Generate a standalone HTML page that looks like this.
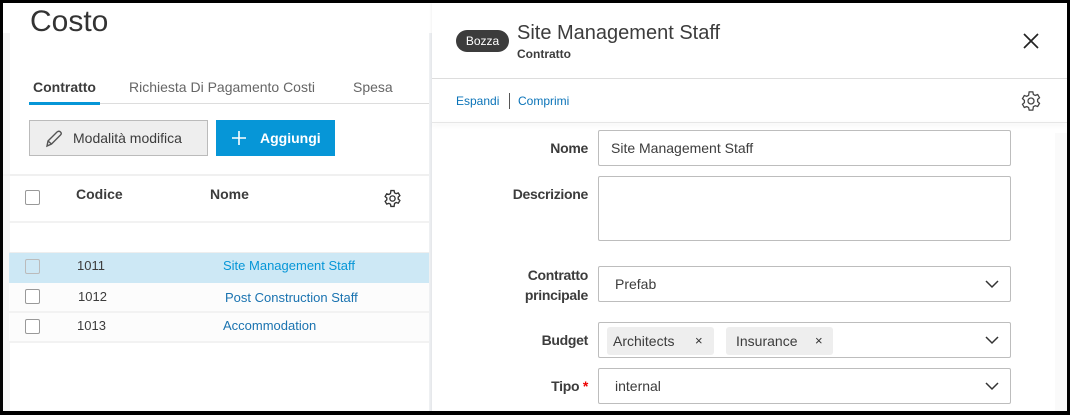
<!DOCTYPE html>
<html><head><meta charset="utf-8"><style>
*{box-sizing:border-box;margin:0;padding:0}
body{width:1070px;height:415px;overflow:hidden;background:#000;font-family:"Liberation Sans",sans-serif;position:relative}
.abs{position:absolute}
#page{position:absolute;left:3px;top:3px;width:1064px;height:408px;background:#fff;overflow:hidden}
.t{position:absolute;white-space:nowrap}
.cb{position:absolute;width:15px;height:15px;border:1px solid #999;border-radius:2px;background:#fff}
.lbl{position:absolute;right:479px;font-size:14px;font-weight:bold;color:#3c3c3c;text-align:right;letter-spacing:-0.3px}
.inp{position:absolute;left:595px;width:413px;border:1px solid #bdbdbd;border-radius:2px;background:#fff}
.chev{position:absolute;right:11px;top:12px}
</style></head><body>
<div id="page">
  <div class="abs" style="left:0;top:30px;width:7px;height:380px;background:#f5f5f5"></div>
  <div class="t" style="left:27px;top:2px;font-size:30px;color:#333">Costo</div>
  <div class="t" style="left:30px;top:76px;font-size:14px;font-weight:bold;color:#3c3c3c">Contratto</div>
  <div class="t" style="left:126px;top:76px;font-size:14px;color:#666">Richiesta Di Pagamento Costi</div>
  <div class="t" style="left:350px;top:76px;font-size:14px;color:#666">Spesa</div>
  <div class="abs" style="left:26px;top:100px;width:404px;height:1px;background:#ddd"></div>
  <div class="abs" style="left:26px;top:99px;width:71px;height:3px;background:#0696d7"></div>
  <div class="abs" style="left:26px;top:117px;width:179px;height:36px;background:#eee;border:1px solid #bbb"></div>
  <svg class="abs" style="left:41px;top:126px" width="20" height="20" viewBox="0 0 20 20"><path d="M3 17 L4 12 L13 3 Q15 1.5 16.5 3 Q18 4.5 16.5 6 L7.5 15 Z M4 12 L7.5 15" fill="none" stroke="#555" stroke-width="1.4"/></svg>
  <div class="t" style="left:70px;top:127px;font-size:14px;color:#3c3c3c">Modalità modifica</div>
  <div class="abs" style="left:213px;top:117px;width:119px;height:36px;background:#0696d7"></div>
  <svg class="abs" style="left:228px;top:127px" width="16" height="16"><path d="M8 1V15M1 8H15" stroke="#fff" stroke-width="1.6"/></svg>
  <div class="t" style="left:257px;top:127px;font-size:14px;font-weight:bold;color:#fff">Aggiungi</div>
  <div class="abs" style="left:0;top:171px;width:430px;height:2px;background:#f0f0f0"></div>
  <div class="cb" style="left:22px;top:187px"></div>
  <div class="t" style="left:73px;top:183px;font-size:14px;font-weight:bold;color:#3c3c3c">Codice</div>
  <div class="t" style="left:207px;top:183px;font-size:14px;font-weight:bold;color:#3c3c3c">Nome</div>
  <svg class="abs" style="left:380px;top:186px" width="19" height="19" viewBox="0 0 24 24"><path d="M10 2h4l.6 2.8 2 1.1 2.7-.9 2 3.4-2.1 1.9v2.4l2.1 1.9-2 3.4-2.7-.9-2 1.1L14 22h-4l-.6-2.8-2-1.1-2.7.9-2-3.4 2.1-1.9v-2.4L2.7 9.4l2-3.4 2.7.9 2-1.1z" fill="none" stroke="#333" stroke-width="1.7"/><circle cx="12" cy="12" r="3.3" fill="none" stroke="#333" stroke-width="1.7"/></svg>
  <div class="abs" style="left:6px;top:218px;width:422px;height:2px;background:#f2f2f2"></div>
  <div class="abs" style="left:6px;top:249px;width:422px;height:1px;background:#eee"></div>
  <div class="abs" style="left:6px;top:250px;width:422px;height:30px;background:#cde8f5"></div>
  <div class="abs" style="left:6px;top:280px;width:422px;height:30px;background:#fcfcfc;border-bottom:2px solid #f2f2f2"></div>
  <div class="abs" style="left:6px;top:310px;width:422px;height:30px;background:#fcfcfc;border-bottom:2px solid #f2f2f2"></div>
  <div class="cb" style="left:22px;top:256px;border-color:#bbb;background:transparent"></div>
  <div class="cb" style="left:22px;top:286px"></div>
  <div class="cb" style="left:22px;top:316px"></div>
  <div class="t" style="left:74px;top:255px;font-size:13px;color:#3c3c3c">1011</div>
  <div class="t" style="left:75px;top:286px;font-size:13px;color:#3c3c3c">1012</div>
  <div class="t" style="left:74px;top:315px;font-size:13px;color:#3c3c3c">1013</div>
  <div class="t" style="left:220px;top:255px;font-size:13px;color:#0696d7">Site Management Staff</div>
  <div class="t" style="left:222px;top:287px;font-size:13px;color:#1a73b0">Post Construction Staff</div>
  <div class="t" style="left:220px;top:315px;font-size:13px;color:#1a73b0">Accommodation</div>
  <div class="abs" style="left:426px;top:30px;width:3px;height:380px;background:#eef0f3"></div>
  <div class="t" style="left:429px;top:350px;font-size:9px;color:#bbb">||</div>
  <div class="abs" style="left:429px;top:0;width:635px;height:410px;background:#fff;box-shadow:-1px 0 2px rgba(0,0,0,0.05)"></div>
  <div class="abs" style="left:453px;top:27px;width:53px;height:22px;border-radius:11px;background:#3c3c3c;color:#fff;font-size:12px;text-align:center;line-height:22px">Bozza</div>
  <div class="t" style="left:514px;top:19px;font-size:20px;color:#3c3c3c">Site Management Staff</div>
  <div class="t" style="left:514px;top:44px;font-size:12px;font-weight:bold;color:#3c3c3c">Contratto</div>
  <svg class="abs" style="left:1020px;top:30px" width="16" height="16"><path d="M1 1L15 15M15 1L1 15" stroke="#222" stroke-width="1.7"/></svg>
  <div class="abs" style="left:429px;top:75px;width:635px;height:1px;background:#ddd"></div>
  <div class="t" style="left:453px;top:91px;font-size:12px;color:#0a73b8">Espandi</div>
  <div class="abs" style="left:506px;top:90px;width:1px;height:16px;background:#555"></div>
  <div class="t" style="left:515px;top:91px;font-size:12px;color:#0a73b8">Comprimi</div>
  <svg class="abs" style="left:1017px;top:87px" width="22" height="22" viewBox="0 0 24 24"><path d="M10 2h4l.6 2.8 2 1.1 2.7-.9 2 3.4-2.1 1.9v2.4l2.1 1.9-2 3.4-2.7-.9-2 1.1L14 22h-4l-.6-2.8-2-1.1-2.7.9-2-3.4 2.1-1.9v-2.4L2.7 9.4l2-3.4 2.7.9 2-1.1z" fill="none" stroke="#444" stroke-width="1.4"/><circle cx="12" cy="12" r="3.3" fill="none" stroke="#444" stroke-width="1.4"/></svg>
  <div class="abs" style="left:429px;top:119px;width:635px;height:1px;background:#e6e6e6;box-shadow:0 2px 5px rgba(0,0,0,0.12)"></div>
  <div class="abs" style="left:1052px;top:130px;width:12px;height:280px;background:#fafafa"></div>

  <div class="lbl" style="top:137px">Nome</div>
  <div class="inp" style="top:127px;height:36px"><div class="t" style="left:12px;top:9px;font-size:14px;color:#3c3c3c">Site Management Staff</div></div>
  <div class="lbl" style="top:183px">Descrizione</div>
  <div class="inp" style="top:173px;height:65px"></div>
  <div class="lbl" style="top:262px;line-height:20px">Contratto<br>principale</div>
  <div class="inp" style="top:263px;height:36px"><div class="t" style="left:16px;top:9px;font-size:14px;color:#3c3c3c">Prefab</div>
    <svg class="chev" width="14" height="10"><path d="M1 2L7 8L13 2" fill="none" stroke="#333" stroke-width="1.5"/></svg></div>
  <div class="lbl" style="top:329px">Budget</div>
  <div class="inp" style="top:319px;height:36px">
    <div class="abs" style="left:8px;top:4px;width:107px;height:28px;background:#eee;border-radius:3px"><div class="t" style="left:6px;top:6px;font-size:14px;color:#3c3c3c">Architects</div><div class="t" style="left:88px;top:6px;font-size:13px;color:#333">×</div></div>
    <div class="abs" style="left:127px;top:4px;width:107px;height:28px;background:#eee;border-radius:3px"><div class="t" style="left:10px;top:6px;font-size:14px;color:#3c3c3c">Insurance</div><div class="t" style="left:89px;top:6px;font-size:13px;color:#333">×</div></div>
    <svg class="chev" width="14" height="10"><path d="M1 2L7 8L13 2" fill="none" stroke="#333" stroke-width="1.5"/></svg></div>
  <div class="lbl" style="top:375px">Tipo <span style="color:#e00">*</span></div>
  <div class="inp" style="top:365px;height:36px"><div class="t" style="left:16px;top:9px;font-size:14px;color:#3c3c3c">internal</div>
    <svg class="chev" width="14" height="10"><path d="M1 2L7 8L13 2" fill="none" stroke="#333" stroke-width="1.5"/></svg></div>
</div>
</body></html>
